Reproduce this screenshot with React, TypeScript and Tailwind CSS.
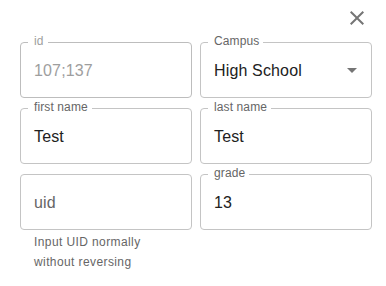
import { type ReactNode } from 'react';

interface OutlinedFieldProps {
  readonly label: string;
  readonly value?: string;
  readonly disabled?: boolean;
  readonly helper?: ReactNode;
  readonly select?: boolean;
}

function OutlinedField({ label, value, disabled = false, helper, select = false }: OutlinedFieldProps) {
  const hasValue = !!value;

  return (
    <div className="flex flex-col">
      <div
        className={`relative box-border flex h-[56px] items-center rounded-[4px] border pl-[13px] pr-[13px] ${
          disabled ? 'border-[#bdbdbd]' : 'border-[#c4c4c4]'
        }`}
      >
        {hasValue && (
          // floating label over the border notch
          <span
            className={`absolute left-[7px] top-[-10px] bg-white pl-[6px] pr-[4px] text-[12px] leading-[17px] tracking-[0.11px] ${
              disabled ? 'text-[#9e9e9e]' : 'text-[#666666]'
            }`}
          >
            {label}
          </span>
        )}
        <span
          className={`text-[16px] leading-[23px] tracking-[0.15px] ${
            !hasValue ? 'text-[#666666]' : disabled ? 'text-[#9e9e9e]' : 'text-[#212121]'
          }`}
        >
          {hasValue ? value : label}
        </span>
        {select && (
          <svg
            className="absolute right-[7px] top-[calc(50%-12px)] h-6 w-6 text-[#757575]"
            viewBox="0 0 24 24"
            fill="currentColor"
            aria-hidden="true"
          >
            <path d="M7 10l5 5 5-5z" />
          </svg>
        )}
      </div>
      {helper && (
        <p className="mx-[14px] mt-[3px] text-[12px] leading-[19.92px] tracking-[0.4px] text-[#666666]">
          {helper}
        </p>
      )}
    </div>
  );
}

export default function App() {
  return (
    <div
      className="h-[286px] w-[386px] bg-white"
      style={{ fontFamily: '"Liberation Sans", Arial, Helvetica, sans-serif' }}
    >
      <div className="flex h-[42px] justify-end pr-[17px] pt-[6px]">
        <button type="button" className="h-6 w-6 text-[#757575]" aria-label="close">
          <svg viewBox="0 0 24 24" fill="currentColor" className="h-6 w-6" aria-hidden="true">
            <path d="M19 6.41 17.59 5 12 10.59 6.41 5 5 6.41 10.59 12 5 17.59 6.41 19 12 13.41 17.59 19 19 17.59 13.41 12z" />
          </svg>
        </button>
      </div>
      <div className="grid grid-cols-2 items-start gap-x-2 gap-y-[10px] pl-[20px] pr-[14px]">
        <OutlinedField label="id" value="107;137" disabled />
        <OutlinedField label="Campus" value="High School" select />
        <OutlinedField label="first name" value="Test" />
        <OutlinedField label="last name" value="Test" />
        <OutlinedField label="uid" helper="Input UID normally without reversing" />
        <OutlinedField label="grade" value="13" />
      </div>
    </div>
  );
}
